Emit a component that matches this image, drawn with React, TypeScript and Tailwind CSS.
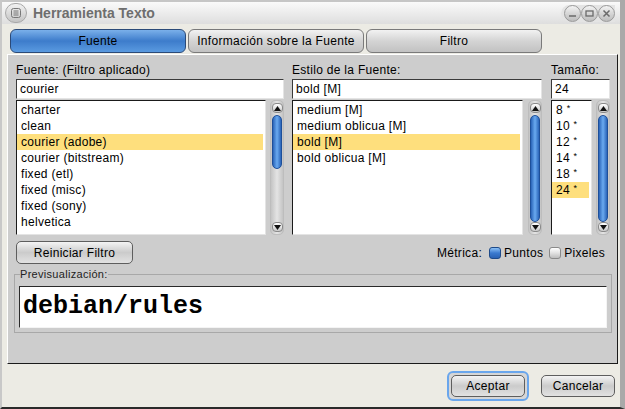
import React from 'react';

const UI = { fontFamily: '"Liberation Sans", Arial, sans-serif', letterSpacing: '0.3px' };

function Circle({ children, className = '' }: { children?: React.ReactNode; className?: string }) {
  return (
    <div className={`w-[17px] h-[17px] rounded-full border border-[#9a9a9a] bg-gradient-to-b from-[#f4f4f4] via-[#d6d6d6] to-[#bdbdbd] flex items-center justify-center ${className}`}>
      {children}
    </div>
  );
}

function TitleBar() {
  return (
    <div className="h-[24px] flex items-center border-t-2 border-[#c6c6c6] bg-gradient-to-b from-[#fafafa] via-[#ececec] to-[#dedede] pl-[3px] pr-[5px]">
      <div className="w-[22px] h-[20px] rounded-full border border-[#a8a8a8] bg-gradient-to-b from-[#f2f2f2] to-[#c4c4c4] flex items-center justify-center">
        <svg width="10" height="10" viewBox="0 0 10 10" fill="none" stroke="#777" strokeWidth="1">
          <rect x="0.5" y="0.5" width="9" height="9" rx="2" />
          <path d="M2.5 3h5M2.5 5h5M2.5 7h5" />
        </svg>
      </div>
      <span className="ml-[6px] text-[14px] font-bold text-[#6e6e6e] tracking-normal">Herramienta Texto</span>
      <div className="flex-1" />
      <div className="flex items-center pl-[3px] rounded-l-full bg-[#e4e4e4]">
        <Circle>
          <svg width="9" height="9" viewBox="0 0 9 9"><path d="M1 7h7" stroke="#6a6a6a" strokeWidth="1.5" /></svg>
        </Circle>
        <Circle>
          <svg width="9" height="9" viewBox="0 0 9 9" fill="none"><rect x="1" y="2" width="7" height="5" stroke="#6a6a6a" strokeWidth="1.3" /></svg>
        </Circle>
        <Circle>
          <svg width="9" height="9" viewBox="0 0 9 9"><path d="M1.5 1.5l6 6M7.5 1.5l-6 6" stroke="#6a6a6a" strokeWidth="1.5" /></svg>
        </Circle>
      </div>
    </div>
  );
}

function Tab({ label, active }: { label: string; active?: boolean }) {
  return (
    <div
      className={
        active
          ? 'w-[176px] h-[24px] rounded-[6px] border border-[#2b4a78] bg-gradient-to-b from-[#7ab0ea] via-[#3d7ccb] to-[#5a9ae0] flex items-center justify-center text-[12px] text-black'
          : 'w-[176px] h-[24px] rounded-[6px] border border-[#7a7a7a] bg-gradient-to-b from-[#f2f2f2] via-[#d4d4d4] to-[#c2c2c2] flex items-center justify-center text-[12px] text-black'
      }
    >
      {label}
    </div>
  );
}

function Arrow({ up }: { up?: boolean }) {
  return (
    <div className="w-[11px] h-[10px] rounded-[4px] border border-[#8a8a8a] bg-gradient-to-b from-[#ffffff] to-[#c8c8c8] flex items-center justify-center">
      <svg width="7" height="5" viewBox="0 0 7 5">
        <path d={up ? 'M3.5 0L7 5H0z' : 'M0 0h7L3.5 5z'} fill="#111" />
      </svg>
    </div>
  );
}

function ScrollBar({ thumb }: { thumb: number }) {
  return (
    <div className="w-[14px] h-[135px] rounded-[5px] border border-[#bdbdbd] bg-gradient-to-r from-[#c4c4c4] via-[#e4e4e4] to-[#c4c4c4] flex flex-col items-center py-[2px]">
      <Arrow up />
      <div
        className="mt-[2px] w-[10px] rounded-[5px] border border-[#1d4f9a] bg-gradient-to-r from-[#2a64b8] via-[#6aaaf0] to-[#2a64b8]"
        style={{ height: thumb }}
      />
      <div className="flex-1" />
      <Arrow />
    </div>
  );
}

function Input({ value }: { value: string }) {
  return (
    <div className="h-[20px] bg-white border border-t-[#3a3a3a] border-l-[#3a3a3a] border-b-[#e4e4e4] border-r-[#e4e4e4] flex items-center px-[3px] text-[12px] text-black">
      {value}
    </div>
  );
}

function List({ items, selected, width }: { items: React.ReactNode[]; selected: number; width: number }) {
  return (
    <div
      className="h-[135px] bg-white border border-t-[#1a1a1a] border-l-[#1a1a1a] border-b-[#e4e4e4] border-r-[#e4e4e4] pt-[1px] pr-[2px] overflow-hidden"
      style={{ width }}
    >
      {items.map((it, i) => (
        <div key={i} className={`h-[16px] leading-[16px] pl-[4px] text-[12px] text-black whitespace-nowrap ${i === selected ? 'bg-[#fedf7d]' : ''}`}>
          {it}
        </div>
      ))}
    </div>
  );
}

function Column({
  label, value, items, selected, listW, thumb, width, gap,
}: {
  label: string; value: string; items: React.ReactNode[]; selected: number; listW: number; thumb: number; width: number; gap: number;
}) {
  return (
    <div className="flex flex-col" style={{ width }}>
      <div className="h-[16px] text-[12px] leading-[14px] text-black whitespace-nowrap">{label}</div>
      <Input value={value} />
      <div className="flex mt-[1px]" style={{ gap }}>
        <List items={items} selected={selected} width={listW} />
        <ScrollBar thumb={thumb} />
      </div>
    </div>
  );
}

function GrayButton({ label, className = '' }: { label: string; className?: string }) {
  return (
    <div className={`rounded-[5px] border border-[#5e5e5e] bg-gradient-to-b from-[#f4f4f4] via-[#cbcbcb] to-[#e2e2e2] flex items-center justify-center text-[12px] text-black ${className}`}>
      {label}
    </div>
  );
}

const size = (n: number) => (
  <>
    {n} <span className="text-[9px] relative -top-[3px]">*</span>
  </>
);

export default function App() {
  return (
    <div style={UI} className="w-[625px] h-[409px] bg-[#ecebe4] border-l-2 border-r-[5px] border-b-2 border-l-[#c8c8c8] border-r-[#a9a9a9] border-b-[#2a2a2a] flex flex-col overflow-hidden">
      <TitleBar />
      <div className="flex gap-[2px] pl-[8px] mt-[5px]">
        <Tab label="Fuente" active />
        <Tab label="Información sobre la Fuente" />
        <Tab label="Filtro" />
      </div>
      <div className="ml-[5px] mt-[1px] w-[611px] h-[310px] bg-[#cdcdcd] border border-t-white border-l-white border-b-[#1a1a1a] border-r-[#1a1a1a] pl-[8px] pt-[8px] pr-[6px]">
        <div className="flex">
          <Column
            label="Fuente: (Filtro aplicado)"
            value="courier"
            items={['charter', 'clean', 'courier (adobe)', 'courier (bitstream)', 'fixed (etl)', 'fixed (misc)', 'fixed (sony)', 'helvetica']}
            selected={2}
            listW={250}
            thumb={54}
            width={268}
            gap={4}
          />
          <div className="w-[8px]" />
          <Column
            label="Estilo de la Fuente:"
            value="bold [M]"
            items={['medium [M]', 'medium oblicua [M]', 'bold [M]', 'bold oblicua [M]']}
            selected={2}
            listW={231}
            thumb={107}
            width={250}
            gap={5}
          />
          <div className="w-[9px]" />
          <Column
            label="Tamaño:"
            value="24"
            items={[size(8), size(10), size(12), size(14), size(18), size(24)]}
            selected={5}
            listW={41}
            thumb={107}
            width={59}
            gap={4}
          />
        </div>
        <div className="flex items-center mt-[6px] h-[23px]">
          <GrayButton label="Reiniciar Filtro" className="w-[117px] h-[23px]" />
          <div className="flex-1" />
          <span className="text-[12px] text-black">Métrica:</span>
          <div className="ml-[7px] w-[12px] h-[12px] rounded-[3px] border border-[#1d4a8a] bg-gradient-to-b from-[#8cc0f4] via-[#3a7ad0] to-[#2a62b4]" />
          <span className="ml-[3px] text-[12px] text-black">Puntos</span>
          <div className="ml-[6px] w-[12px] h-[12px] rounded-[3px] border border-[#8a8a8a] bg-gradient-to-b from-[#ffffff] via-[#e2e2e2] to-[#bdbdbd]" />
          <span className="ml-[3px] text-[12px] text-black">Pixeles</span>
          <div className="w-[6px]" />
        </div>
        <fieldset className="mt-[4px] ml-[-2px] w-[598px] border border-[#a8a8a8] px-[4px] pb-[4px]">
          <legend className="ml-[1px] text-[11px] leading-[12px] text-[#222]">Previsualización:</legend>
          <div className="mt-[6px] h-[42px] bg-white border border-t-[#2a2a2a] border-l-[#2a2a2a] border-b-[#f4f4f4] border-r-[#f4f4f4] flex items-center pl-[3px]">
            <span className="text-[25px] font-bold text-black tracking-normal" style={{ fontFamily: '"Liberation Mono", "Courier New", monospace' }}>
              debian/rules
            </span>
          </div>
        </fieldset>
      </div>
      <div className="flex justify-end items-center mt-[7px] pr-[5px]">
        <div className="w-[82px] h-[30px] rounded-[6px] border-2 border-[#6aa6ec] bg-[#d6d6d6] flex items-center justify-center">
          <GrayButton label="Aceptar" className="w-[74px] h-[22px]" />
        </div>
        <GrayButton label="Cancelar" className="ml-[12px] w-[74px] h-[22px]" />
      </div>
    </div>
  );
}
